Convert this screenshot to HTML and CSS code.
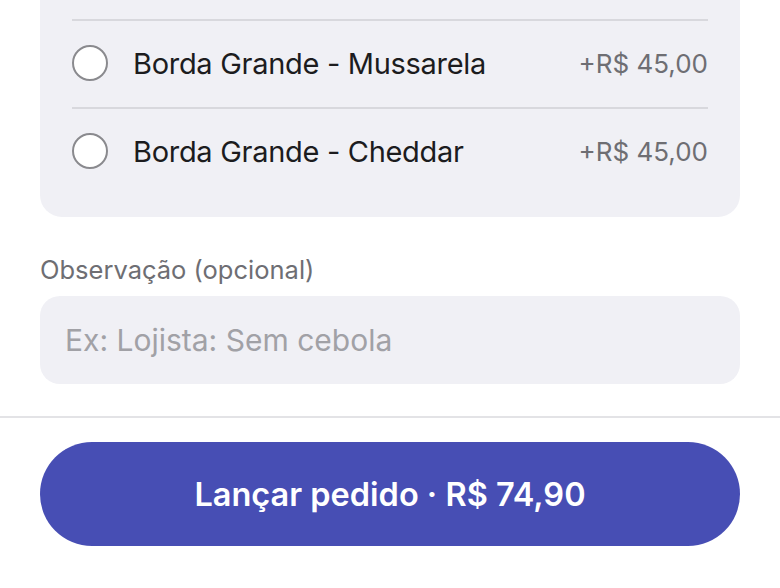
FILE: index.html
```html
<!DOCTYPE html>
<html lang="pt-BR">
<head>
    <meta charset="UTF-8">
    <meta name="viewport" content="width=device-width, initial-scale=1.0">
    <title>Lançar pedido</title>
    <link rel="stylesheet" href="styles.css">
</head>
<body>
    <div class="content">
        <div class="options">
            <label class="option">
                <input type="radio" name="borda" value="mussarela">
                <span class="option-name">Borda Grande - Mussarela</span>
                <span class="option-price">+R$ 45,00</span>
            </label>
            <label class="option">
                <input type="radio" name="borda" value="cheddar">
                <span class="option-name">Borda Grande - Cheddar</span>
                <span class="option-price">+R$ 45,00</span>
            </label>
        </div>

        <div class="field">
            <label for="obs" class="field-label">Observação (opcional)</label>
            <input type="text" id="obs" placeholder="Ex: Lojista: Sem cebola">
        </div>
    </div>

    <div class="footer">
        <button type="button" class="submit">Lançar pedido · R$ 74,90</button>
    </div>
</body>
</html>
```

FILE: styles.css
```css
body {
    margin: 0;
    font-family: Inter, "Noto Sans", sans-serif;
    color: #1c1c1e;
    background: #fff;
}
.content {
    padding: 0 40px;
}
.options {
    margin-top: -24px;
    padding: 43px 32px 22px;
    background-color: #f0f0f5;
    border-radius: 22px;
}
.option {
    display: flex;
    align-items: center;
    height: 88px;
    padding-bottom: 2px;
    border-top: 2px solid #d8d8dd;
    box-sizing: border-box;
}
.option input[type="radio"] {
    appearance: none;
    width: 36px;
    height: 36px;
    margin: 0 25px 0 0;
    border: 2px solid #8a8a8e;
    border-radius: 50%;
    background: #fff;
    flex-shrink: 0;
}
.option-name {
    flex: 1;
    font-size: 29px;
    letter-spacing: -0.3px;
}
.option-price {
    font-size: 26px;
    color: #6e6e73;
}
.field {
    margin-top: 37px;
}
.field-label {
    display: block;
    font-size: 25.5px;
    color: #6e6e73;
    margin-bottom: 11px;
}
input[type="text"] {
    display: block;
    width: 100%;
    height: 88px;
    box-sizing: border-box;
    padding: 0 25px;
    border: none;
    border-radius: 20px;
    background-color: #f0f0f5;
    font-family: inherit;
    font-size: 30px;
    color: #1c1c1e;
    outline: none;
}
input[type="text"]::placeholder {
    color: #a1a1a6;
}
.footer {
    margin-top: 32px;
    border-top: 2px solid #e3e3e6;
    padding: 24px 40px 0;
}
.submit {
    display: block;
    width: 100%;
    height: 104px;
    border: none;
    border-radius: 52px;
    background-color: #474eb4;
    color: #fff;
    font-family: inherit;
    font-size: 32.5px;
    font-weight: 600;
    cursor: pointer;
}
```
